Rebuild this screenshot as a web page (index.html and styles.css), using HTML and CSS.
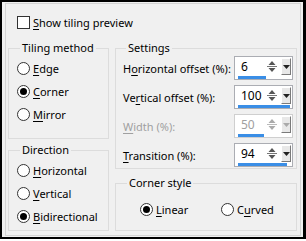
FILE: index.html
```html
<!DOCTYPE html>
<html lang="en">
<head>
    <meta charset="UTF-8">
    <meta name="viewport" content="width=device-width, initial-scale=1.0">
    <title>Tiling</title>
    <link rel="stylesheet" href="styles.css">
</head>
<body>
    <div class="frame">
        <div class="panel">
            <label class="check-row"><span class="checkbox"></span><span><u>S</u>how tiling preview</span></label>
            <div class="columns">
                <div class="col-left">
                    <fieldset class="group method">
                        <legend>Tiling method</legend>
                        <label class="radio-row"><span class="radio"></span><span><u>E</u>dge</span></label>
                        <label class="radio-row"><span class="radio checked"></span><span><u>C</u>orner</span></label>
                        <label class="radio-row"><span class="radio"></span><span><u>M</u>irror</span></label>
                    </fieldset>
                    <fieldset class="group direction">
                        <legend>Direction</legend>
                        <label class="radio-row"><span class="radio"></span><span><u>H</u>orizontal</span></label>
                        <label class="radio-row"><span class="radio"></span><span><u>V</u>ertical</span></label>
                        <label class="radio-row"><span class="radio checked"></span><span><u>B</u>idirectional</span></label>
                    </fieldset>
                </div>
                <div class="col-right">
                    <fieldset class="group settings">
                        <legend>Settings</legend>
                        <div class="field">
                            <span class="field-label">H<u>o</u>rizontal offset (%):</span>
                            <div class="spin">
                                <div class="spin-top">
                                    <span class="spin-value">6</span>
                                    <svg class="updown" width="10" height="13" viewBox="0 0 10 13"><path d="M5 1 L1.5 5 H8.5 Z M5 12 L1.5 8 H8.5 Z" fill="#555"/><path d="M0 6.5 H10" stroke="#777" stroke-width="1"/></svg>
                                    <span class="drop"><svg width="7" height="4" viewBox="0 0 7 4"><path d="M0 0 H7 L3.5 4 Z" fill="#222"/></svg></span>
                                </div>
                                <div class="spin-bar"><span style="width:53%"></span></div>
                            </div>
                        </div>
                        <div class="field">
                            <span class="field-label">Ve<u>r</u>tical offset (%):</span>
                            <div class="spin">
                                <div class="spin-top">
                                    <span class="spin-value">100</span>
                                    <svg class="updown" width="10" height="13" viewBox="0 0 10 13"><path d="M5 1 L1.5 5 H8.5 Z M5 12 L1.5 8 H8.5 Z" fill="#555"/><path d="M0 6.5 H10" stroke="#777" stroke-width="1"/></svg>
                                    <span class="drop"><svg width="7" height="4" viewBox="0 0 7 4"><path d="M0 0 H7 L3.5 4 Z" fill="#222"/></svg></span>
                                </div>
                                <div class="spin-bar"><span style="width:100%"></span></div>
                            </div>
                        </div>
                        <div class="field disabled">
                            <span class="field-label"><u>W</u>idth (%):</span>
                            <div class="spin">
                                <div class="spin-top">
                                    <span class="spin-value">50</span>
                                    <svg class="updown" width="10" height="13" viewBox="0 0 10 13"><path d="M5 1 L1.5 5 H8.5 Z M5 12 L1.5 8 H8.5 Z" fill="#aaa"/><path d="M0 6.5 H10" stroke="#bbb" stroke-width="1"/></svg>
                                    <span class="drop"><svg width="7" height="4" viewBox="0 0 7 4"><path d="M0 0 H7 L3.5 4 Z" fill="#aaa"/></svg></span>
                                </div>
                                <div class="spin-bar"><span style="width:50%"></span></div>
                            </div>
                        </div>
                        <div class="field">
                            <span class="field-label"><u>T</u>ransition (%):</span>
                            <div class="spin">
                                <div class="spin-top">
                                    <span class="spin-value">94</span>
                                    <svg class="updown" width="10" height="13" viewBox="0 0 10 13"><path d="M5 1 L1.5 5 H8.5 Z M5 12 L1.5 8 H8.5 Z" fill="#555"/><path d="M0 6.5 H10" stroke="#777" stroke-width="1"/></svg>
                                    <span class="drop"><svg width="7" height="4" viewBox="0 0 7 4"><path d="M0 0 H7 L3.5 4 Z" fill="#222"/></svg></span>
                                </div>
                                <div class="spin-bar"><span style="width:94%"></span></div>
                            </div>
                        </div>
                    </fieldset>
                    <fieldset class="group corner">
                        <legend>Corner style</legend>
                        <div class="corner-options">
                            <label class="radio-row"><span class="radio checked"></span><span><u>L</u>inear</span></label>
                            <label class="radio-row"><span class="radio"></span><span>C<u>u</u>rved</span></label>
                        </div>
                    </fieldset>
                </div>
            </div>
        </div>
    </div>
</body>
</html>
```

FILE: styles.css
```css
body {
    margin: 0;
    background: #fff;
    font-family: "Noto Sans", "Open Sans", sans-serif;
    font-size: 11px;
    color: #000;
}
u {
    text-decoration-thickness: 1px;
    text-underline-offset: 2px;
}
.frame {
    width: 306px;
    height: 239px;
    box-sizing: border-box;
    border: 2px solid #000;
    border-right-width: 3px;
    background: #f0f0f0;
    padding: 1px 2px 1px 3px;
}
.panel {
    height: 100%;
    box-sizing: border-box;
    border: 1px solid #d4d4d4;
    padding: 11px 3px 0 2px;
}
.check-row {
    display: flex;
    align-items: center;
    gap: 3px;
    margin-left: 9px;
    height: 14px;
}
.checkbox {
    width: 11px;
    height: 11px;
    border: 1px solid #333;
    background: #fff;
}
.columns {
    display: grid;
    grid-template-columns: 101px 182px;
    gap: 6px;
    margin-top: 12px;
}
.col-left, .col-right {
    display: flex;
    flex-direction: column;
    white-space: nowrap;
}
.group {
    margin: 0;
    border: 1px solid #dcdcdc;
    padding: 0 0 0 8px;
}
.group legend {
    padding: 0 2px;
    margin-left: 3px;
    line-height: 14px;
}
.method {
    height: 96px;
}
.direction {
    height: 86px;
    margin-top: 4px;
}
.radio-row {
    display: flex;
    align-items: center;
    gap: 3px;
    height: 23px;
}
.method .radio-row:first-of-type,
.direction .radio-row:first-of-type {
    margin-top: 2px;
}
.radio {
    width: 11px;
    height: 11px;
    border: 1px solid #333;
    border-radius: 50%;
    background: #fff;
    display: flex;
    align-items: center;
    justify-content: center;
}
.radio.checked::after {
    content: "";
    width: 7px;
    height: 7px;
    border-radius: 50%;
    background: #000;
}
.settings {
    height: 126px;
    padding-left: 7px;
}
.field {
    display: flex;
    align-items: center;
    justify-content: space-between;
    height: 24px;
    margin-top: 5px;
    padding-right: 3px;
}
.field:first-of-type {
    margin-top: 1px;
}
.field.disabled .field-label,
.field.disabled .spin-value {
    color: #a0a0a0;
}
.spin {
    width: 59px;
    height: 24px;
    box-sizing: border-box;
    border: 1px solid #abadb3;
    background: #fff;
    display: flex;
    flex-direction: column;
    padding: 1px 1px 0 3px;
}
.field.disabled .spin {
    border-color: #cfcfcf;
}
.spin-top {
    display: flex;
    align-items: center;
    height: 18px;
}
.spin-value {
    flex: 1;
    padding-left: 3px;
    font-size: 12px;
}
.updown {
    margin-right: 4px;
}
.drop {
    width: 10px;
    height: 17px;
    box-sizing: border-box;
    border: 1px solid;
    border-color: #fff #7a7a7a #7a7a7a #fff;
    background: #e8e8e8;
    display: flex;
    align-items: center;
    justify-content: center;
}
.spin-bar {
    height: 3px;
    width: 52px;
    margin-top: 1px;
}
.spin-bar span {
    display: block;
    height: 3px;
    background: #3a8ee6;
}
.corner {
    height: 53px;
    margin-top: 7px;
}
.corner-options {
    display: grid;
    grid-template-columns: 81px auto;
    padding-left: 16px;
    margin-top: 8px;
}
```
